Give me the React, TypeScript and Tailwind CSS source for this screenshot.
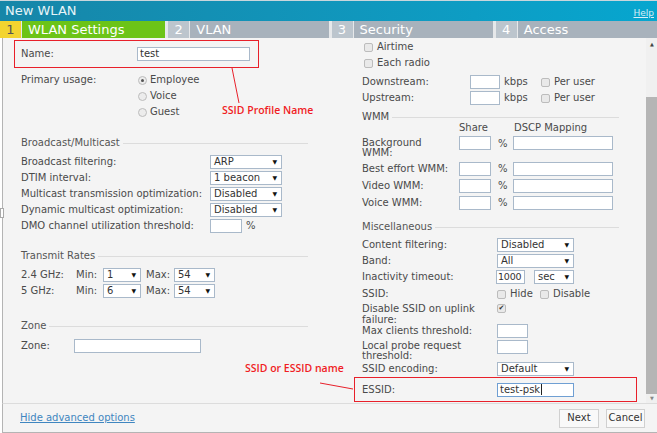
import type { ReactNode } from 'react'

function Box({ w, children, focus }: { w: string; children?: ReactNode; focus?: boolean }) {
  return (
    <div
      className={`${w} h-[14px] shrink-0 border ${focus ? 'border-[#6f9fd3]' : 'border-[#a9b9ca]'} flex items-center bg-white px-[2px] text-[#333]`}
    >
      {children}
    </div>
  )
}

function Select({ w, value }: { w: string; value: string }) {
  return (
    <div className={`${w} flex h-[14px] shrink-0 items-center justify-between border border-[#a9b9ca] bg-white pl-[3px] pr-[4px] text-[#333]`}>
      <span>{value}</span>
      <span className="text-[6px] text-[#111]">▼</span>
    </div>
  )
}

function Check({ checked }: { checked?: boolean }) {
  return (
    <span className="flex h-[9px] w-[9px] shrink-0 items-center justify-center rounded-[2px] border border-[#bcbcbc] bg-[#e9e9e9] text-[7px] leading-none text-[#333]">
      {checked ? '✔' : ''}
    </span>
  )
}

function Radio({ checked }: { checked?: boolean }) {
  return (
    <span className="flex h-[9px] w-[9px] shrink-0 items-center justify-center rounded-full border border-[#bcbcbc] bg-[#ececec]">
      {checked && <span className="h-[3px] w-[3px] rounded-full bg-[#555]" />}
    </span>
  )
}

function Heading({ label, w }: { label: string; w: string }) {
  return (
    <div className={`${w} flex h-[16px] items-center gap-[3px] text-[#555]`}>
      <span>{label}</span>
      <span className="h-px flex-1 bg-[#dcdcdc]" />
    </div>
  )
}

function Row({ label, lw, children, className = '' }: { label: string; lw: string; children?: ReactNode; className?: string }) {
  return (
    <div className={`flex h-[16px] items-center ${className}`}>
      <span className={`${lw} shrink-0 whitespace-nowrap`}>{label}</span>
      {children}
    </div>
  )
}

function Tab({ n, label, active, w }: { n: string; label: string; active?: boolean; w: string }) {
  return (
    <div className={`${w} flex h-full gap-px`}>
      <div className={`flex w-[21px] items-center justify-center ${active ? 'bg-[#f3d430] text-[#555]' : 'bg-[#bcc5cd] text-white'}`}>{n}</div>
      <div className={`flex flex-1 items-center pl-[6px] text-white ${active ? 'bg-[#6cc417]' : 'bg-[#a8b2bc]'}`}>{label}</div>
    </div>
  )
}

export default function App() {
  return (
    <div className="relative h-[433px] w-[657px] overflow-hidden bg-white font-['DejaVu_Sans',sans-serif] text-[10px] leading-none text-[#4a4a4a]">
      {/* title bar */}
      <div className="flex h-[21px] items-start justify-between border-t border-[#c9d6dc] bg-gradient-to-r from-[#1686a8] to-[#06a6cf] pl-[5px] pr-[3px]">
        <span className="mt-[3px] text-[13px] text-[#e6f4f8]">New WLAN</span>
        <span className="mt-[8px] text-[9px] text-[#d8eef6] underline">Help</span>
      </div>

      {/* tabs */}
      <div className="flex h-[17px] gap-[3px] bg-[#e6e8ea] text-[13px]">
        <Tab n="1" label="WLAN Settings" active w="w-[166px]" />
        <Tab n="2" label="VLAN" w="w-[161px]" />
        <Tab n="3" label="Security" w="w-[162px]" />
        <Tab n="4" label="Access" w="w-[162px]" />
      </div>

      {/* body */}
      <div className="ml-[2px] flex h-[365px] border-l border-[#b4b4b4] bg-[#f4f4f4]">
        {/* left column */}
        <div className="w-[338px] shrink-0 pl-[18px] pt-[2px]">
          <div className="-ml-[7px] flex h-[28px] w-[245px] items-center border border-[#e8202a] pl-[6px]">
            <span className="w-[116px] shrink-0">Name:</span>
            <Box w="w-[113px]">test</Box>
          </div>

          <div className="mt-[4px] flex">
            <div className="flex h-[16px] w-[117px] shrink-0 items-center">Primary usage:</div>
            <div>
              {['Employee', 'Voice', 'Guest'].map((r, i) => (
                <div key={r} className="flex h-[16px] items-center gap-[3px]">
                  <Radio checked={i === 0} />
                  <span>{r}</span>
                </div>
              ))}
            </div>
          </div>

          <Heading label="Broadcast/Multicast" w="w-[287px] mt-[15px]" />
          <div className="mt-[3px]">
            <Row label="Broadcast filtering:" lw="w-[189px]"><Select w="w-[72px]" value="ARP" /></Row>
            <Row label="DTIM interval:" lw="w-[189px]"><Select w="w-[72px]" value="1 beacon" /></Row>
            <Row label="Multicast transmission optimization:" lw="w-[189px]"><Select w="w-[72px]" value="Disabled" /></Row>
            <Row label="Dynamic multicast optimization:" lw="w-[189px]"><Select w="w-[72px]" value="Disabled" /></Row>
            <Row label="DMO channel utilization threshold:" lw="w-[189px]">
              <Box w="w-[32px]" />
              <span className="ml-[4px]">%</span>
            </Row>
          </div>

          <Heading label="Transmit Rates" w="w-[287px] mt-[14px]" />
          <div className="mt-[3px]">
            {[
              ['2.4 GHz:', '1'],
              ['5 GHz:', '6'],
            ].map(([g, min]) => (
              <div key={g} className="flex h-[16px] items-center">
                <span className="w-[55px] shrink-0">{g}</span>
                <span className="w-[27px] shrink-0">Min:</span>
                <Select w="w-[38px]" value={min} />
                <span className="ml-[5px] w-[28px] shrink-0">Max:</span>
                <Select w="w-[41px]" value="54" />
              </div>
            ))}
          </div>

          <Heading label="Zone" w="w-[287px] mt-[19px]" />
          <Row label="Zone:" lw="w-[53px]" className="mt-[4px]"><Box w="w-[127px]" /></Row>
        </div>

        {/* right column */}
        <div className="w-[305px] shrink-0 pl-[21px] pt-px">
          {['Airtime', 'Each radio'].map((c) => (
            <div key={c} className="flex h-[16px] items-center gap-[4px] pl-[2px]">
              <Check />
              <span>{c}</span>
            </div>
          ))}
          <div className="mt-[3px]">
            {['Downstream:', 'Upstream:'].map((l) => (
              <Row key={l} label={l} lw="w-[108px]">
                <Box w="w-[30px]" />
                <span className="ml-[4px] w-[37px]">kbps</span>
                <Check />
                <span className="ml-[4px]">Per user</span>
              </Row>
            ))}
          </div>

          <div className="mt-[6px] flex h-[10px] w-[257px] items-center gap-[3px]">
            <span>WMM</span>
            <span className="h-px flex-1 bg-[#dcdcdc]" />
          </div>
          <div className="flex h-[11px] items-center">
            <span className="ml-[97px] w-[55px]">Share</span>
            <span>DSCP Mapping</span>
          </div>
          <div className="mt-[3px] flex h-[21px] items-start">
            <span className="w-[97px] shrink-0 pt-[2px] leading-[10px]">Background<br />WMM:</span>
            <Box w="w-[32px]" />
            <span className="ml-[7px] mt-[3px] w-[15px]">%</span>
            <Box w="w-[100px]" />
          </div>
          {['Best effort WMM:', 'Video WMM:', 'Voice WMM:'].map((l, i) => (
            <div key={l} className={`flex h-[14px] items-center ${i === 0 ? 'mt-[5px]' : 'mt-[3px]'}`}>
              <span className="w-[97px] shrink-0 whitespace-nowrap">{l}</span>
              <Box w="w-[32px]" />
              <span className="ml-[7px] w-[15px]">%</span>
              <Box w="w-[100px]" />
            </div>
          ))}

          <Heading label="Miscellaneous" w="w-[257px] mt-[9px]" />
          <div className="mt-[2px]">
            <Row label="Content filtering:" lw="w-[135px]"><Select w="w-[77px]" value="Disabled" /></Row>
            <Row label="Band:" lw="w-[135px]"><Select w="w-[77px]" value="All" /></Row>
            <Row label="Inactivity timeout:" lw="w-[134px]">
              <div className="flex h-[14px] w-[29px] shrink-0 items-center border border-[#a9b9ca] bg-white px-px text-[9.5px] tracking-[-0.2px] text-[#333]">1000</div>
              <span className="w-[9px]" />
              <Select w="w-[40px]" value="sec" />
            </Row>
            <Row label="SSID:" lw="w-[135px]" className="mt-px">
              <Check />
              <span className="ml-[4px] w-[30px]">Hide</span>
              <Check />
              <span className="ml-[4px]">Disable</span>
            </Row>
          </div>
          <div className="mt-px flex h-[20px] items-start">
            <span className="w-[135px] shrink-0 leading-[11px]">Disable SSID on uplink<br />failure:</span>
            <span className="mt-px"><Check checked /></span>
          </div>
          <Row label="Max clients threshold:" lw="w-[135px]"><Box w="w-[31px]" /></Row>
          <div className="flex h-[22px] items-start pt-px">
            <span className="w-[135px] shrink-0 pt-px leading-[10px]">Local probe request<br />threshold:</span>
            <Box w="w-[31px]" />
          </div>
          <Row label="SSID encoding:" lw="w-[135px]"><Select w="w-[77px]" value="Default" /></Row>
          <div className="-ml-[8px] flex h-[25px] w-[283px] items-center border border-[#e8202a] pl-[7px]">
            <span className="w-[135px] shrink-0">ESSID:</span>
            <Box w="w-[77px]" focus>
              <span>test-psk</span>
              <span className="ml-px h-[11px] w-px bg-[#222]" />
            </Box>
          </div>
        </div>

        {/* scrollbar */}
        <div className="ml-auto flex w-[12px] shrink-0 flex-col items-center bg-[#f0f0f0]">
          <span className="mt-[4px] text-[5px] text-[#444]">▲</span>
          <div className="mt-[50px] w-full flex-1 bg-[#b5b5b5]" />
          <span className="mb-[2px] mt-[2px] text-[5px] text-[#888]">▼</span>
        </div>
      </div>

      {/* footer */}
      <div className="ml-[2px] flex h-[30px] items-center justify-between border-b border-l border-t border-[#b4b4b4] border-t-[#dcdcdc] bg-[#f4f4f4] pl-[17px] pr-[12px]">
        <span className="text-[10px] text-[#3f86c0] underline">Hide advanced options</span>
        <div className="flex gap-[7px]">
          <span className="flex h-[19px] w-[40px] items-center justify-center border border-[#d0d0d0] bg-[#f9f9f9] text-[10px] text-[#333]">Next</span>
          <span className="flex h-[19px] w-[39px] items-center justify-center border border-[#d0d0d0] bg-[#f9f9f9] text-[10px] text-[#333]">Cancel</span>
        </div>
      </div>

      {/* splitter handle */}
      <div className="absolute left-0 top-[208px] h-[10px] w-[4px] border border-[#aaa] bg-white" />

      {/* annotations */}
      <svg className="pointer-events-none absolute left-0 top-0" width="657" height="433">
        <line x1="232" y1="68" x2="239" y2="103" stroke="#e8202a" strokeWidth="1" />
        <line x1="320" y1="383" x2="353" y2="389" stroke="#e8202a" strokeWidth="1" />
      </svg>
      <span className="absolute left-[222px] top-[105px] font-['Open_Sans',sans-serif] text-[10.5px] font-semibold text-[#f01c24]">SSID Profile Name</span>
      <span className="absolute left-[245px] top-[363px] font-['Open_Sans',sans-serif] text-[10.5px] font-semibold text-[#f01c24]">SSID or ESSID name</span>
    </div>
  )
}
